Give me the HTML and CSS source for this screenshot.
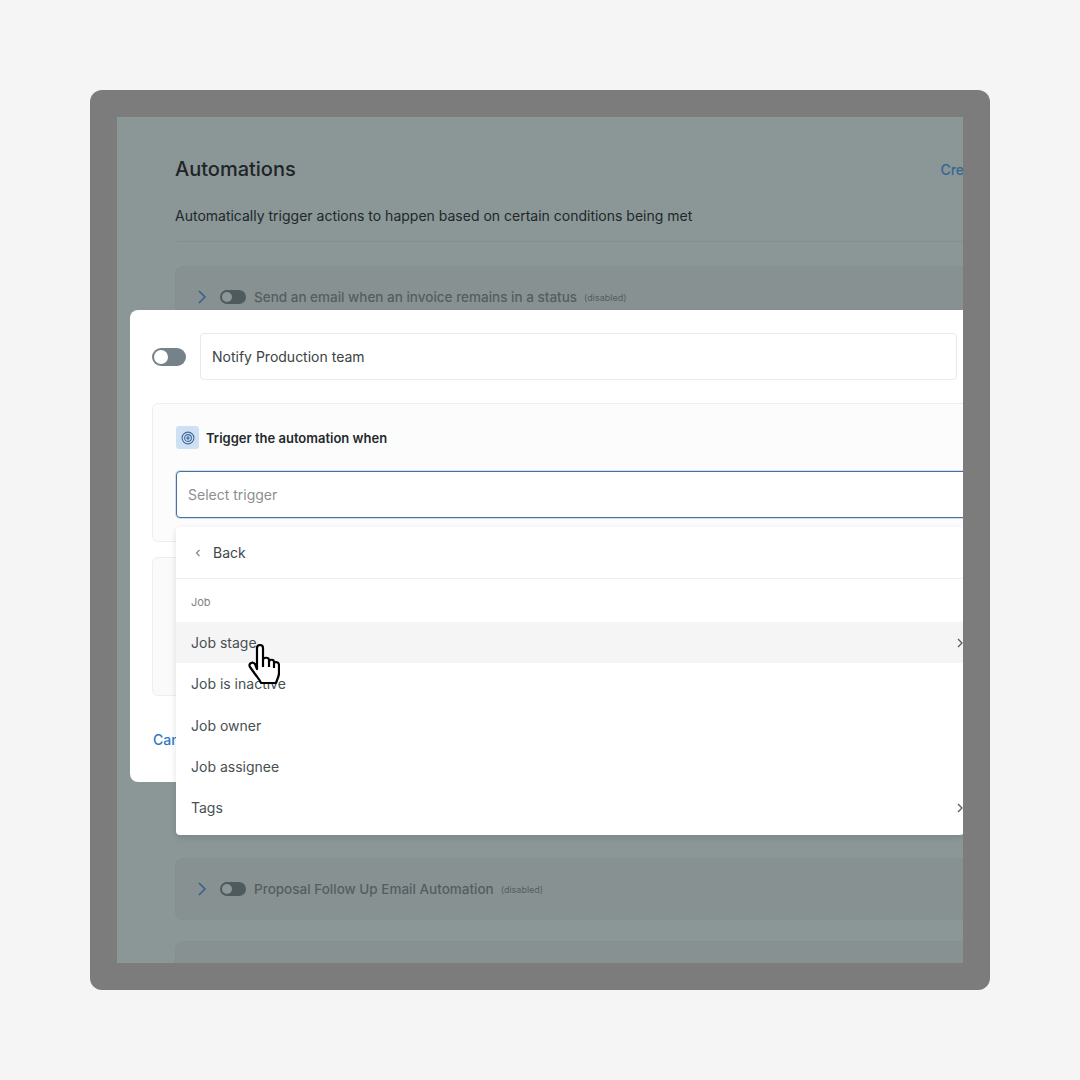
FILE: index.html
```html
<!DOCTYPE html>
<html lang="en">
<head>
    <meta charset="UTF-8">
    <title>Automations</title>
    <link rel="stylesheet" href="styles.css">
</head>
<body>
    <div class="frame">
        <div class="screen">
            <main class="page">
                <div class="page-head">
                    <h1>Automations</h1>
                    <a class="create-link" href="#">Create custom automation</a>
                </div>
                <p class="page-sub">Automatically trigger actions to happen based on certain conditions being met</p>
                <div class="page-rule"></div>

                <div class="auto-row auto-row-first">
                    <svg class="chev" viewBox="0 0 12 16"><path d="M3 2l6 6-6 6"/></svg>
                    <span class="mini-toggle"></span>
                    <span class="auto-name">Send an email when an invoice remains in a status</span>
                    <span class="auto-state">(disabled)</span>
                </div>
                <div class="auto-row auto-row-second">
                    <svg class="chev" viewBox="0 0 12 16"><path d="M3 2l6 6-6 6"/></svg>
                    <span class="mini-toggle"></span>
                    <span class="auto-name">Proposal Follow Up Email Automation</span>
                    <span class="auto-state">(disabled)</span>
                </div>
                <div class="auto-row auto-row-third"></div>
            </main>

            <section class="modal">
                <div class="name-row">
                    <span class="toggle"></span>
                    <div class="name-input">Notify Production team</div>
                </div>
                <div class="trigger-card">
                    <div class="trigger-title">
                        <span class="target-icon">
                            <svg viewBox="0 0 14 14"><circle cx="7" cy="7" r="5.9"/><circle cx="7" cy="7" r="3.4"/><circle cx="7" cy="7" r="1.1"/></svg>
                        </span>
                        <b>Trigger the automation when</b>
                    </div>
                    <div class="select-input">Select trigger</div>
                </div>
                <div class="action-card"></div>
                <a class="cancel-link" href="#">Cancel</a>
            </section>

            <div class="menu">
                <div class="menu-back">
                    <svg class="back-chev" viewBox="0 0 8 12"><path d="M5.5 3L2.5 6l3 3"/></svg>
                    <span>Back</span>
                </div>
                <div class="menu-label">Job</div>
                <div class="menu-item menu-item-hover">Job stage<svg class="item-chev" viewBox="0 0 8 12"><path d="M2 2l4 4-4 4"/></svg></div>
                <div class="menu-item">Job is inactive</div>
                <div class="menu-item">Job owner</div>
                <div class="menu-item">Job assignee</div>
                <div class="menu-item">Tags<svg class="item-chev" viewBox="0 0 8 12"><path d="M2 2l4 4-4 4"/></svg></div>
            </div>

            <svg class="hand" viewBox="0 0 32 42">
                <path d="M9 26V5c0-4 6-4 6 0v12c0-3 6-3 6 0v2c0-3 5-3 5 0v2c0-3 5-2.500 5 1v8c0 4-2 6-3 10H13c-1-3-3-5-6-9l-5-7c-2-3 2-6 5-3z"/>
                <path d="M15 17v7M21 19v5M26 21v4"/>
            </svg>
        </div>
    </div>
</body>
</html>
```

FILE: styles.css
```css
body {
    margin: 0;
    width: 1080px;
    height: 1080px;
    background-color: #f5f5f5;
    display: flex;
    align-items: center;
    justify-content: center;
    font-family: "Inter", "Liberation Sans", sans-serif;
    overflow: hidden;
}

.frame {
    width: 900px;
    height: 900px;
    box-sizing: border-box;
    padding: 27px;
    background-color: #7c7c7c;
    border-radius: 12px;
}

.screen {
    position: relative;
    width: 846px;
    height: 846px;
    overflow: hidden;
    background-color: #8b9697;
}

/* dimmed page behind the modal */
.page {
    width: 1000px;
    box-sizing: border-box;
    padding: 36px 0 0 58px;
}

.page-head {
    display: flex;
    justify-content: space-between;
    align-items: center;
    height: 32px;
}

.page-head h1 {
    margin: 0;
    font-size: 20px;
    font-weight: 500;
    color: #1e2526;
}

.create-link {
    font-size: 14px;
    font-weight: 500;
    color: #376594;
    text-decoration: none;
}

.page-sub {
    margin: 21px 0 0;
    font-size: 14px;
    line-height: 20px;
    color: #20282a;
}

.page-rule {
    height: 1px;
    margin: 15px 0 0 2px;
    background-color: #838e8f;
}

.auto-row {
    display: flex;
    align-items: center;
    height: 62px;
    padding-left: 20px;
    border: 1px solid #848f90;
    border-radius: 8px;
    background-color: #879192;
    box-sizing: border-box;
}

.auto-row-first {
    margin-top: 24px;
}

.auto-row-second {
    margin-top: 530px;
}

.auto-row-third {
    margin-top: 21px;
}

.chev {
    width: 12px;
    height: 16px;
    fill: none;
    stroke: #39608c;
    stroke-width: 1.6;
}

.mini-toggle {
    position: relative;
    width: 26px;
    height: 14px;
    margin-left: 12px;
    border-radius: 7px;
    background-color: #4f5a5d;
}

.mini-toggle::before {
    content: "";
    position: absolute;
    left: 2px;
    top: 2px;
    width: 10px;
    height: 10px;
    border-radius: 50%;
    background-color: #8b9697;
}

.auto-name {
    margin-left: 8px;
    font-size: 13.500px;
    font-weight: 500;
    color: #535e60;
}

.auto-state {
    margin-left: 7px;
    font-size: 9px;
    color: #535e60;
}

/* modal */
.modal {
    position: absolute;
    left: 13px;
    top: 193px;
    width: 900px;
    height: 472px;
    box-sizing: border-box;
    padding: 23px 22px;
    background-color: #fff;
    border-radius: 8px;
}

.name-row {
    display: flex;
    align-items: center;
    gap: 14px;
}

.toggle {
    position: relative;
    width: 34px;
    height: 18px;
    border-radius: 9px;
    background-color: #75828a;
}

.toggle::before {
    content: "";
    position: absolute;
    left: 2px;
    top: 2px;
    width: 14px;
    height: 14px;
    border-radius: 50%;
    background-color: #fff;
}

.name-input {
    width: 757px;
    height: 47px;
    box-sizing: border-box;
    padding-left: 11px;
    line-height: 45px;
    font-size: 14px;
    color: #3b4244;
    border: 1px solid #e8e9ea;
    border-radius: 4px;
}

.trigger-card {
    height: 139px;
    margin-top: 23px;
    box-sizing: border-box;
    padding: 22px 23px;
    border: 1px solid #eeeeee;
    border-radius: 6px;
    background-color: #fcfcfc;
}

.trigger-title {
    display: flex;
    align-items: center;
    gap: 7px;
    font-size: 13px;
    color: #24292b;
}

.trigger-title b {
    font-weight: 600;
}

.target-icon {
    display: flex;
    align-items: center;
    justify-content: center;
    width: 23px;
    height: 23px;
    border-radius: 3px;
    background-color: #cfe0f3;
}

.target-icon svg {
    width: 14px;
    height: 14px;
    fill: none;
    stroke: #3f6a9c;
    stroke-width: 1.1;
}

.select-input {
    height: 47px;
    margin-top: 22px;
    box-sizing: border-box;
    padding-left: 11px;
    line-height: 45px;
    font-size: 14px;
    color: #8b8f91;
    background-color: #fff;
    border: 1px solid #4a6f9c;
    border-radius: 4px;
    box-shadow: 0 0 0 1px #cfdff0;
}

.action-card {
    height: 139px;
    margin-top: 15px;
    box-sizing: border-box;
    border: 1px solid #eeeeee;
    border-radius: 6px;
    background-color: #fafafa;
}

.cancel-link {
    display: block;
    margin-top: 35px;
    margin-left: 1px;
    font-size: 14px;
    font-weight: 500;
    color: #2f78c4;
    text-decoration: none;
}

/* dropdown over the modal */
.menu {
    position: absolute;
    left: 59px;
    top: 410px;
    width: 788px;
    height: 308px;
    box-sizing: border-box;
    background-color: #fff;
    border-radius: 4px;
    box-shadow: 0 2px 6px rgba(0, 0, 0, 0.12);
}

.menu-back {
    display: flex;
    align-items: center;
    height: 52px;
    box-sizing: border-box;
    padding-left: 18px;
    gap: 11px;
    font-size: 14px;
    color: #3f4648;
    border-bottom: 1px solid #f0f0f0;
}

.back-chev {
    width: 8px;
    height: 12px;
    fill: none;
    stroke: #7f8587;
    stroke-width: 1.2;
}

.menu-label {
    height: 43px;
    box-sizing: border-box;
    padding: 16px 0 0 15px;
    font-size: 11px;
    line-height: 14px;
    color: #7d8284;
}

.menu-item {
    display: flex;
    align-items: center;
    justify-content: space-between;
    height: 41.300px;
    padding: 0 0 0 15px;
    font-size: 14px;
    color: #484f51;
}

.menu-item-hover {
    background-color: #f5f5f5;
}

.item-chev {
    width: 8px;
    height: 12px;
    fill: none;
    stroke: #555;
    stroke-width: 1.2;
}

.hand {
    position: absolute;
    left: 131px;
    top: 526px;
    width: 32px;
    height: 42px;
    fill: #fff;
    stroke: #000;
    stroke-width: 2.2;
    stroke-linejoin: round;
}
```
